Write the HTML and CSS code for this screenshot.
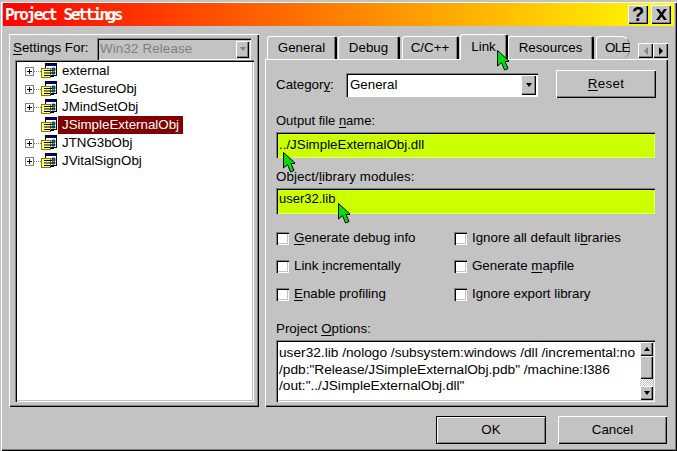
FILE: index.html
```html
<!DOCTYPE html>
<html lang="en">
<head>
<meta charset="utf-8">
<title>Project Settings</title>
<link rel="stylesheet" href="styles.css">
</head>
<body>
<svg class="defs" width="0" height="0" aria-hidden="true">
  <defs>
    <symbol id="proj" viewBox="0 0 16 16">
      <rect x="4.5" y="0.5" width="11" height="12" fill="#fff" stroke="#000"/>
      <rect x="5" y="1" width="10" height="2" fill="#000080"/>
      <path d="M11 5h3v3h-3zM11 9h3v2h-3z" fill="#008080" stroke="#000" stroke-width=".6"/>
      <rect x="0.5" y="5.5" width="9" height="9" fill="#ffff80" stroke="#808000"/>
      <path d="M3 7.5h8M3 10h8M3 12.5h6" stroke="#000" stroke-width="1"/>
      <rect x="9" y="13" width="4" height="1" fill="#000"/>
    </symbol>
    <symbol id="cursor" viewBox="0 0 12 21">
      <path d="M.5.5V16l4-3.500L7.500 20l3.500-1.500-3-7H12.500z" fill="#00e000" stroke="#000" stroke-width="1" stroke-linejoin="miter"/>
    </symbol>
  </defs>
</svg>
<main class="window">
  <header class="titlebar">
    <h1 class="title">Project Settings</h1>
    <div class="caption-buttons">
      <button class="caption-btn help">?</button>
      <button class="caption-btn close">
        <svg width="11" height="11" viewBox="0 0 11 11"><path d="M0 0h3l2.500 3.500L8 0h3L7 5.500 11 11H8L5.500 7.500 3 11H0l4-5.500z" fill="#000"/></svg>
      </button>
    </div>
  </header>

  <div class="content">
    <section class="left-panel">
      <div class="settings-row">
        <label class="settings-label"><u>S</u>ettings For:</label>
        <div class="combo disabled">
          <span class="combo-value">Win32 Release</span>
          <span class="combo-arrow"><i class="arrow-down muted"></i></span>
        </div>
      </div>
      <ul class="tree">
        <li class="tree-row"><span class="expander"></span><svg class="tree-icon"><use href="#proj"/></svg><span class="tree-label">external</span></li>
        <li class="tree-row"><span class="expander"></span><svg class="tree-icon"><use href="#proj"/></svg><span class="tree-label">JGestureObj</span></li>
        <li class="tree-row"><span class="expander"></span><svg class="tree-icon"><use href="#proj"/></svg><span class="tree-label">JMindSetObj</span></li>
        <li class="tree-row"><span class="expander none"></span><svg class="tree-icon"><use href="#proj"/></svg><span class="tree-label selected">JSimpleExternalObj</span></li>
        <li class="tree-row"><span class="expander"></span><svg class="tree-icon"><use href="#proj"/></svg><span class="tree-label">JTNG3bObj</span></li>
        <li class="tree-row"><span class="expander"></span><svg class="tree-icon"><use href="#proj"/></svg><span class="tree-label">JVitalSignObj</span></li>
      </ul>
    </section>

    <section class="right-panel">
      <nav class="tabs">
        <span class="tab t-general">General</span>
        <span class="tab t-debug">Debug</span>
        <span class="tab t-cpp">C/C++</span>
        <span class="tab t-link active">Link</span>
        <span class="tab t-res">Resources</span>
        <span class="tab t-ole">OLE</span>
        <span class="tab-scroll">
          <span class="scroll-btn"><i class="arrow-left"></i></span>
          <span class="scroll-btn"><i class="arrow-right"></i></span>
        </span>
      </nav>
      <div class="tab-page">
        <div class="category-row">
          <label class="category-label">Categor<u>y</u>:</label>
          <div class="combo category">
            <span class="combo-value">General</span>
            <span class="combo-arrow"><i class="arrow-down"></i></span>
          </div>
          <button class="btn reset"><span><u>R</u>eset</span></button>
        </div>
        <label class="field-label first">Output file <u>n</u>ame:</label>
        <div class="input">../JSimpleExternalObj.dll</div>
        <label class="field-label second">Object/<u>l</u>ibrary modules:</label>
        <div class="input lib">user32.lib</div>
        <div class="checks">
          <label class="check"><span class="box"></span><span><u>G</u>enerate debug info</span></label>
          <label class="check"><span class="box"></span><span>Ignore all default li<u>b</u>raries</span></label>
          <label class="check"><span class="box"></span><span>Link <u>i</u>ncrementally</span></label>
          <label class="check"><span class="box"></span><span>Generate <u>m</u>apfile</span></label>
          <label class="check"><span class="box"></span><span><u>E</u>nable profiling</span></label>
          <label class="check"><span class="box"></span><span>Ignore export library</span></label>
        </div>
        <label class="field-label options">Project <u>O</u>ptions:</label>
        <div class="textarea">
          <div class="textarea-text">user32.lib /nologo /subsystem:windows /dll /incremental:no<br>/pdb:"Release/JSimpleExternalObj.pdb" /machine:I386<br>/out:"../JSimpleExternalObj.dll"</div>
          <div class="vscroll">
            <span class="vbtn"><i class="arrow-up"></i></span>
            <span class="vthumb"></span>
            <span class="vtrack"></span>
            <span class="vbtn"><i class="arrow-down"></i></span>
          </div>
        </div>
      </div>
    </section>
  </div>

  <footer class="footer">
    <button class="btn ok default"><span>OK</span></button>
    <button class="btn cancel"><span>Cancel</span></button>
  </footer>

  <svg class="cursor c1"><use href="#cursor"/></svg>
  <svg class="cursor c2"><use href="#cursor"/></svg>
  <svg class="cursor c3"><use href="#cursor"/></svg>
</main>
</body>
</html>
```
FILE: styles.css
```css
* { box-sizing: border-box; }
html, body { margin: 0; padding: 0; }
body { width: 677px; height: 451px; overflow: hidden; background: #c3c3c3; }
.defs { position: absolute; }
u { text-decoration: underline; text-underline-offset: 2px; text-decoration-thickness: 1px; }

.window {
  position: relative;
  width: 677px; height: 451px;
  padding: 3px 3px 2px;
  background: #c3c3c3;
  color: #000;
  font: 13.33px/16px "Liberation Sans", Arial, sans-serif;
  border-top: 1px solid #c3c3c3;
  box-shadow: inset 1px 1px 0 #c3c3c3, inset 2px 2px 0 #fff, inset -1px -1px 0 #000, inset -2px -2px 0 #808080;
  display: flex; flex-direction: column;
}

.titlebar {
  height: 23px; margin-top: -1px; flex: none;
  display: flex; align-items: center; justify-content: space-between;
  padding: 0 3px 0 2px;
  background: linear-gradient(to right, #ff0000, #ffff00);
}
.title {
  margin: 0;
  font: bold 16px/20px "DejaVu Sans Mono", monospace;
  color: #fff; letter-spacing: -2.450px;
  word-spacing: 1px;
}
.caption-buttons { display: flex; gap: 3px; }
.caption-btn {
  width: 20px; height: 19px; padding: 0; margin: 0;
  display: flex; align-items: center; justify-content: center;
  background: #c3c3c3; border: 0;
  box-shadow: inset 1px 1px 0 #fff, inset -1px -1px 0 #000, inset -2px -2px 0 #808080;
  font: bold 20px/17px "Liberation Sans", sans-serif; color: #000;
}

.content { display: flex; gap: 6px; padding: 8px 7px 0 6px; flex: none; height: 381px; }

.left-panel {
  width: 250px; height: 373px; flex: none;
  padding: 4px 5px 5px 6px;
  box-shadow: inset 1px 1px 0 #fff, inset -1px -1px 0 #000, inset -2px -2px 0 #808080;
  display: flex; flex-direction: column;
}
.settings-row { display: flex; align-items: center; height: 22px; flex: none; }
.settings-label { width: 84px; margin-top: -2px; margin-left: -2px; }
.combo {
  display: flex; align-items: center; justify-content: space-between;
  background: #fff;
  box-shadow: inset 1px 1px 0 #808080, inset 2px 2px 0 #000, inset -1px -1px 0 #fff;
  padding: 2px;
}
.combo.disabled { width: 154px; height: 22px; background: #c3c3c3; }
.combo-value { padding-left: 2px; }
.disabled .combo-value { color: #808080; padding-left: 1px; letter-spacing: .15px; }
.combo-arrow {
  width: 14px; height: 17px; background: #c3c3c3; flex: none; margin-right: 0;
  display: flex; align-items: center; justify-content: center;
  box-shadow: inset 1px 1px 0 #fff, inset -1px -1px 0 #000, inset -2px -2px 0 #808080;
}
.disabled .combo-arrow { width: 13px; }

.arrow-down, .arrow-up, .arrow-left, .arrow-right { display: block; width: 0; height: 0; border-style: solid; border-color: transparent; }
.arrow-down { border-width: 4px 3.500px 0; border-top-color: #000; }
.arrow-down.muted { border-top-color: #808080; }
.arrow-up { border-width: 0 3.500px 4px; border-bottom-color: #000; }
.arrow-left { border-width: 4px 4px 4px 0; border-right-color: #808080; }
.arrow-right { border-width: 4px 0 4px 4px; border-left-color: #000; }

.tree {
  list-style: none; margin: 0; padding: 2px 0 0 10px;
  flex: 1;
  background: #fff;
  box-shadow: inset 1px 1px 0 #808080, inset 2px 2px 0 #000, inset -1px -1px 0 #fff, inset -2px -2px 0 #c3c3c3;
}
.tree-row { height: 18px; display: flex; align-items: center; position: relative; }
.expander {
  width: 9px; height: 9px; flex: none; margin-right: 7px;
  border: 1px solid #808080;
  background:
    linear-gradient(#000, #000) center / 5px 1px no-repeat,
    linear-gradient(#000, #000) center / 1px 5px no-repeat,
    #fff;
  position: relative;
}
.expander::after {
  content: ""; position: absolute; left: 8px; top: 3px; width: 7px;
  border-top: 1px dotted #808080;
}
.expander.none { border-color: transparent; background: none; }
.expander.none::after { display: none; }
.tree-icon { width: 16px; height: 16px; flex: none; margin-right: 1px; }
.tree-label { padding: 0 4px; height: 18px; line-height: 18px; }
.tree-label.selected { background: #800000; color: #fff; }

.right-panel { width: 403px; flex: none; display: flex; flex-direction: column; }
.tabs { height: 25px; flex: none; display: flex; align-items: flex-end; position: relative; z-index: 1; }
.tab {
  height: 23px; padding-top: 3px; flex: none; text-align: center;
  border-radius: 3px 3px 0 0;
  border-left: 1px solid #fff; border-top: 1px solid #fff;
  border-right: 2px solid #000;
  box-shadow: inset -1px 0 0 #808080;
}
.t-general { width: 70px; margin-left: 2px; }
.t-debug { width: 62px; margin-left: 1px; }
.t-cpp { width: 57px; margin-left: 2px; }
.t-link {
  width: 48px; height: 26px; margin-bottom: -1px; padding-top: 4px; margin-left: 1px;
  background: #c3c3c3; position: relative; z-index: 2;
}
.t-res { width: 86px; }
.t-ole {
  width: 34px; margin-left: 2px; text-align: left; padding-left: 8px;
  border-right: 1px solid #808080; border-radius: 3px 8px 8px 0 / 3px 10px 10px 0;
  box-shadow: none; white-space: nowrap; letter-spacing: -.6px;
}
.tab-scroll { display: flex; gap: 0; margin-left: 8px; margin-bottom: 1px; }
.scroll-btn {
  width: 15px; height: 15px; background: #c3c3c3;
  display: flex; align-items: center; justify-content: center;
  box-shadow: inset 1px 1px 0 #fff, inset -1px -1px 0 #000, inset -2px -2px 0 #808080;
}

.tab-page {
  height: 348px; flex: none;
  padding: 13px 11px 0 11px;
  box-shadow: inset 1px 1px 0 #fff, inset -1px -1px 0 #000, inset -2px -2px 0 #808080;
}
.category-row { display: flex; align-items: center; height: 26px; }
.category-label { width: 70px; }
.combo.category { width: 192px; height: 24px; }
.category .combo-arrow { height: 20px; width: 15px; }
.btn {
  padding: 0; margin: 0; background: #c3c3c3; border: 0; color: #000;
  font: 13.33px/16px "Liberation Sans", Arial, sans-serif;
  box-shadow: inset 1px 1px 0 #fff, inset -1px -1px 0 #000, inset -2px -2px 0 #808080;
}
.reset { width: 100px; height: 28px; margin-left: 18px; letter-spacing: .3px; margin-top: -3px; }

.field-label { display: block; }
.field-label.first { margin-top: 15px; height: 19px; font-size: 13px; }
.field-label.second { margin-top: 11px; height: 19px; letter-spacing: .1px; }
.input {
  height: 26px; width: 379px;
  background: #ccff00;
  padding: 3px 3px 0; line-height: 19px;
  box-shadow: inset 1px 1px 0 #808080, inset 2px 2px 0 #000, inset -1px -1px 0 #e4ff60;
}
.input.lib { font-size: 13px; padding-top: 1px; }
.checks {
  margin-top: 10px;
  display: grid; grid-template-columns: 178px 1fr; grid-auto-rows: 28px; height: 84px;
}
.check { display: flex; align-items: center; gap: 5px; }
.box {
  width: 13px; height: 13px; background: #fff; flex: none;
  box-shadow: inset 1px 1px 0 #808080, inset 2px 2px 0 #000, inset -1px -1px 0 #fff, inset -2px -2px 0 #c3c3c3;
}
.field-label.options { margin-top: 13px; height: 19px; }
.textarea {
  width: 379px; height: 62px; background: #fff; display: flex;
  padding: 2px;
  box-shadow: inset 1px 1px 0 #808080, inset 2px 2px 0 #000, inset -1px -1px 0 #fff, inset -2px -2px 0 #c3c3c3;
}
.textarea-text { flex: 1; padding: 3px 0 0 1px; font-size: 13.7px; line-height: 16.500px; white-space: nowrap; }
.vscroll { width: 13px; flex: none; display: flex; flex-direction: column; }
.vbtn {
  height: 14px; background: #c3c3c3; flex: none;
  display: flex; align-items: center; justify-content: center;
  box-shadow: inset 1px 1px 0 #fff, inset -1px -1px 0 #000, inset -2px -2px 0 #808080;
}
.vthumb {
  height: 23px; background: #c3c3c3; flex: none;
  box-shadow: inset 1px 1px 0 #fff, inset -1px -1px 0 #000, inset -2px -2px 0 #808080;
}
.vtrack { flex: 1; background: repeating-conic-gradient(#fff 0 25%, #c3c3c3 0 50%) 0 0 / 2px 2px; }

.footer { display: flex; justify-content: flex-end; gap: 12px; padding: 9px 7px 0 0; flex: none; }
.ok { width: 110px; height: 28px; box-shadow: inset 0 0 0 1px #000, inset 2px 2px 0 #fff, inset -2px -2px 0 #808080; }
.cancel { width: 109px; height: 28px; }

.cursor { position: absolute; z-index: 5; width: 12px; height: 21px; pointer-events: none; }
.c1 { left: 497px; top: 49px; }
.c2 { left: 283px; top: 151px; }
.c3 { left: 338px; top: 202px; }
```
